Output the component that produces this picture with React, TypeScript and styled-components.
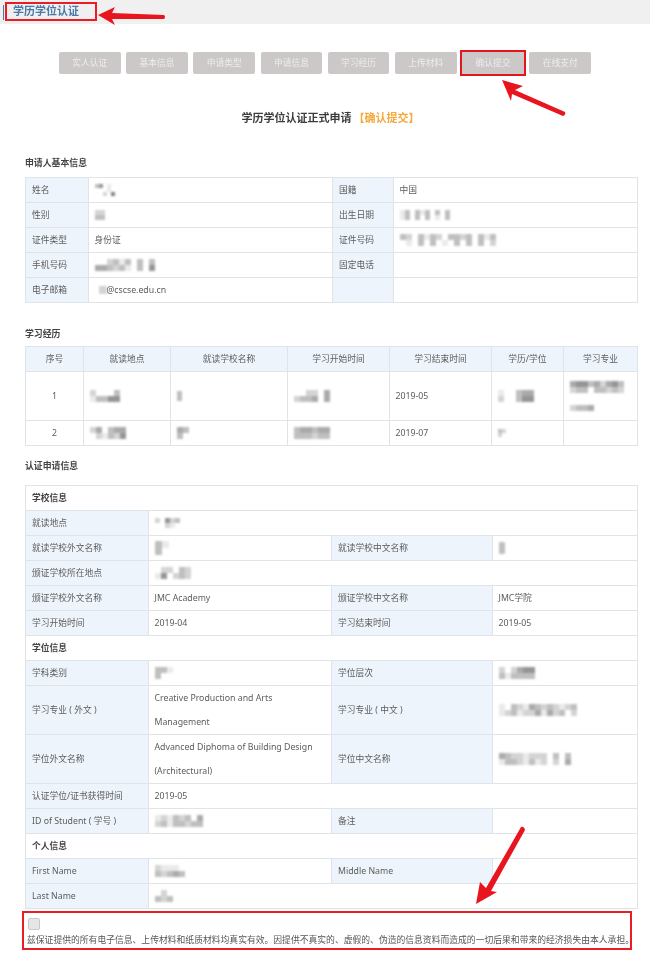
import React from 'react';
import styled, { createGlobalStyle } from 'styled-components';

const GlobalStyle = createGlobalStyle`
  html, body {
    margin: 0;
    padding: 0;
    background: #fff;
  }
  body {
    font-family: "Noto Sans", "Noto Sans CJK SC", sans-serif;
    color: #5c5c5c;
  }
`;

const Page = styled.div`
  position: relative;
  width: 650px;
  height: 960px;
  overflow: hidden;
  background: #fff;
  filter: blur(0.3px);
`;

const TopBar = styled.header`
  height: 24px;
  background: #f0f0f0;
  padding: 2px 0 0 3px;
  box-sizing: border-box;
  display: flex;
  align-items: flex-start;
`;

const TopTitle = styled.div`
  margin-left: 2px;
  width: 92px;
  height: 19px;
  box-sizing: border-box;
  border: 2px solid #ea1c24;
  padding-left: 6px;
  font-size: 11px;
  line-height: 13px;
  font-weight: 700;
  color: #4a78a8;
  white-space: nowrap;
`;

const TopMark = styled.span`
  width: 1px;
  height: 15px;
  margin-top: 3px;
  margin-right: -1px;
  background: #4a78a8;
`;

const Steps = styled.nav`
  display: grid;
  grid-template-columns: repeat(8, 1fr);
  column-gap: 5.5px;
  width: 532px;
  height: 21px;
  margin: 28px 0 0 59px;
`;

const Step = styled.div<{ $marked?: boolean }>`
  border-radius: ${props => (props.$marked ? 0 : 2)}px;
  background: #cbc8c7;
  color: #eeeded;
  font-size: 8.75px;
  line-height: 22px;
  text-align: center;
  white-space: nowrap;
  outline: ${props => (props.$marked ? '2px solid #e3151f' : 'none')};
`;

const MainTitle = styled.h1`
  margin: 37px 0 0;
  font-size: 11px;
  line-height: 16px;
  font-weight: 700;
  color: #3c3c3c;
  text-align: center;
  width: 661px;
`;

const TitleStage = styled.span`
  color: #f3a93c;
  margin-left: 2px;
`;

const SectionHeading = styled.h2<{ $top: number; $bottom: number }>`
  margin: ${props => props.$top}px 0 ${props => props.$bottom}px 25px;
  font-size: 8.9px;
  line-height: 12px;
  font-weight: 700;
  color: #444;
`;

const Table = styled.table`
  margin-left: 25px;
  width: 612px;
  border-collapse: collapse;
  table-layout: fixed;
  font-size: 8.75px;
  line-height: 22px;
`;

const Col = styled.col<{ $w: number }>`
  width: ${props => props.$w}px;
`;

const Row = styled.tr<{ $tall?: boolean }>`
  height: ${props => (props.$tall ? 49 : 25)}px;
`;

const Label = styled.td`
  border: 1px solid #dfe4e8;
  background: #eef4fb;
  padding: 0 6px 1px;
  white-space: nowrap;
`;

const Value = styled.td`
  border: 1px solid #dfe4e8;
  background: #fff;
  padding: 0 5.5px 1px;
  vertical-align: middle;
`;

const WrapValue = styled(Value)`
  line-height: 24px;
  padding-bottom: 0;
`;

const ColumnHead = styled.th`
  border: 1px solid #dfe4e8;
  background: #eef4fb;
  font-weight: 400;
  text-align: center;
  padding: 0;
`;

const CenterValue = styled(Value)`
  text-align: center;
`;

const GroupHead = styled.td`
  border: 1px solid #dfe4e8;
  background: #fff;
  padding: 0 6px 1px;
  font-weight: 700;
  color: #444;
`;

const Pledge = styled.section`
  margin: 2px 0 0 22px;
  width: 610px;
  height: 39px;
  box-sizing: border-box;
  border: 2px solid #ea1c24;
  padding: 5px 0 0 4px;
`;

const Check = styled.div`
  width: 12px;
  height: 12px;
  box-sizing: border-box;
  border: 1px solid #c9c9c9;
  border-radius: 2px;
  background: #e6e6e6;
`;

const PledgeText = styled.p`
  margin: 4px 0 0 -1px;
  font-size: 8.8px;
  line-height: 13px;
  white-space: nowrap;
  color: #555;
`;

const SmudgeSvg = styled.svg`
  display: inline-block;
  vertical-align: middle;
  filter: blur(1px);
`;

const Inline = styled.span`
  white-space: nowrap;
`;

const ArrowLayer = styled.svg`
  position: absolute;
  left: 0;
  top: 0;
  pointer-events: none;
`;

// pixelated names and numbers, every digit is the darkness of one cell
const Smudge = ({ rows, cell = 6 }: { rows: string[]; cell?: number }) => (
  <SmudgeSvg width={rows[0].length * cell} height={rows.length * cell} aria-hidden="true">
    {rows.map((row, y) =>
      row.split('').map((c, x) => (
        <rect
          key={`${x}-${y}`}
          x={x * cell}
          y={y * cell}
          width={cell}
          height={cell}
          fill="#555"
          opacity={Math.min(1, Number(c) / 8)}
        />
      )),
    )}
  </SmudgeSvg>
);

const STEPS = ['实人认证', '基本信息', '申请类型', '申请信息', '学习经历', '上传材料', '确认提交', '在线支付'];

const STUDY_HEADS = ['序号', '就读地点', '就读学校名称', '学习开始时间', '学习结束时间', '学历/学位', '学习专业'];

const App = () => (
  <Page>
    <GlobalStyle />
    <TopBar>
      <TopMark />
      <TopTitle>学历学位认证</TopTitle>
    </TopBar>

    <Steps>
      {STEPS.map((each, index) => (
        <Step key={each} $marked={index === 6}>{each}</Step>
      ))}
    </Steps>

    <MainTitle>
      学历学位认证正式申请<TitleStage>【确认提交】</TitleStage>
    </MainTitle>

    <SectionHeading $top={31} $bottom={8}>申请人基本信息</SectionHeading>
    <Table>
      <colgroup>
        <Col $w={63} /><Col $w={244} /><Col $w={61} /><Col $w={244} />
      </colgroup>
      <tbody>
        <Row>
          <Label>姓名</Label>
          <Value><Smudge rows={['350100', '000100', '002060']} cell={4} /></Value>
          <Label>国籍</Label>
          <Value>中国</Value>
        </Row>
        <Row>
          <Label>性别</Label>
          <Value><Smudge rows={['22', '33']} cell={5} /></Value>
          <Label>出生日期</Label>
          <Value><Smudge rows={['1303130303', '1303030103']} cell={5} /></Value>
        </Row>
        <Row>
          <Label>证件类型</Label>
          <Value>身份证</Value>
          <Label>证件号码</Label>
          <Value><Smudge rows={['3203132033230313', '0103030103030302']} /></Value>
        </Row>
        <Row>
          <Label>手机号码</Label>
          <Value><Smudge rows={['0023130303', '4432310305']} /></Value>
          <Label>固定电话</Label>
          <Value />
        </Row>
        <Row>
          <Label>电子邮箱</Label>
          <Value><Inline><Smudge rows={['022', '022']} cell={4} />@cscse.edu.cn</Inline></Value>
          <Label />
          <Value />
        </Row>
      </tbody>
    </Table>

    <SectionHeading $top={25} $bottom={6}>学习经历</SectionHeading>
    <Table>
      <colgroup>
        <Col $w={58} /><Col $w={87} /><Col $w={117} /><Col $w={102} /><Col $w={102} /><Col $w={72} /><Col $w={74} />
      </colgroup>
      <tbody>
        <Row>
          {STUDY_HEADS.map(each => <ColumnHead key={each}>{each}</ColumnHead>)}
        </Row>
        <Row $tall>
          <CenterValue>1</CenterValue>
          <Value><Smudge rows={['20003', '13355']} /></Value>
          <Value><Smudge rows={['3', '3']} cell={5} /></Value>
          <Value><Smudge rows={['002204', '233404']} /></Value>
          <Value>2019-05</Value>
          <Value><Smudge rows={['100344', '200355']} /></Value>
          <Value><Smudge rows={['455342453', '233033232', '000000000', '000000000', '233400000']} /></Value>
        </Row>
        <Row>
          <CenterValue>2</CenterValue>
          <Value><Smudge rows={['2403440', '0213250']} /></Value>
          <Value><Smudge rows={['43', '30']} /></Value>
          <Value><Smudge rows={['344344', '333233']} /></Value>
          <Value>2019-07</Value>
          <Value><Smudge rows={['32', '20']} cell={4} /></Value>
          <Value />
        </Row>
      </tbody>
    </Table>

    <SectionHeading $top={14} $bottom={13}>认证申请信息</SectionHeading>
    <Table>
      <colgroup>
        <Col $w={123} /><Col $w={183} /><Col $w={161} /><Col $w={145} />
      </colgroup>
      <tbody>
        <Row><GroupHead colSpan={4}>学校信息</GroupHead></Row>
        <Row>
          <Label>就读地点</Label>
          <Value colSpan={3}><Smudge rows={['205230', '002100']} cell={5} /></Value>
        </Row>
        <Row>
          <Label>就读学校外文名称</Label>
          <Value><Smudge rows={['31', '30']} cell={7} /></Value>
          <Label>就读学校中文名称</Label>
          <Value><Smudge rows={['3', '3']} /></Value>
        </Row>
        <Row>
          <Label>颁证学校所在地点</Label>
          <Value colSpan={3}><Smudge rows={['0220320', '1502320']} /></Value>
        </Row>
        <Row>
          <Label>颁证学校外文名称</Label>
          <Value>JMC Academy</Value>
          <Label>颁证学校中文名称</Label>
          <Value>JMC学院</Value>
        </Row>
        <Row>
          <Label>学习开始时间</Label>
          <Value>2019-04</Value>
          <Label>学习结束时间</Label>
          <Value>2019-05</Value>
        </Row>
        <Row><GroupHead colSpan={4}>学位信息</GroupHead></Row>
        <Row>
          <Label>学科类别</Label>
          <Value><Smudge rows={['331', '300']} /></Value>
          <Label>学位层次</Label>
          <Value><Smudge rows={['202455', '313333']} /></Value>
        </Row>
        <Row $tall>
          <Label>学习专业 ( 外文 )</Label>
          <WrapValue>Creative Production and Arts Management</WrapValue>
          <Label>学习专业 ( 中文 )</Label>
          <Value><Smudge rows={['1032143232123', '1231224142302']} /></Value>
        </Row>
        <Row $tall>
          <Label>学位外文名称</Label>
          <WrapValue>Advanced Diphoma of Building Design (Architectural)</WrapValue>
          <Label>学位中文名称</Label>
          <Value><Smudge rows={['432212220303', '133213120204']} /></Value>
        </Row>
        <Row>
          <Label>认证学位/证书获得时间</Label>
          <Value colSpan={3}>2019-05</Value>
        </Row>
        <Row>
          <Label>ID of Student ( 学号 )</Label>
          <Value><Smudge rows={['12132304', '23133233']} /></Value>
          <Label>备注</Label>
          <Value />
        </Row>
        <Row><GroupHead colSpan={4}>个人信息</GroupHead></Row>
        <Row>
          <Label>First Name</Label>
          <Value><Smudge rows={['21110', '32343']} /></Value>
          <Label>Middle Name</Label>
          <Value />
        </Row>
        <Row>
          <Label>Last Name</Label>
          <Value colSpan={3}><Smudge rows={['020', '323']} /></Value>
        </Row>
      </tbody>
    </Table>

    <Pledge>
      <Check />
      <PledgeText>兹保证提供的所有电子信息、上传材料和纸质材料均真实有效。因提供不真实的、虚假的、伪造的信息资料而造成的一切后果和带来的经济损失由本人承担。</PledgeText>
    </Pledge>

    <ArrowLayer width="650" height="960" viewBox="0 0 650 960" aria-hidden="true">
      <g fill="#e8141e">
        <path d="M98 15 L115 7 L112 13 L164 15 Q166 17 164 19 L112 19 L115 25 Z" />
        <path d="M502 80 L523 86 L515 90 L565 112 Q566 115 563 116 L512 94 L511 101 Z" />
        <path d="M476 904 L480 882 L486 888 L521 827 Q524 826 525 830 L491 891 L497 892 Z" />
      </g>
    </ArrowLayer>
  </Page>
);

export default App;
